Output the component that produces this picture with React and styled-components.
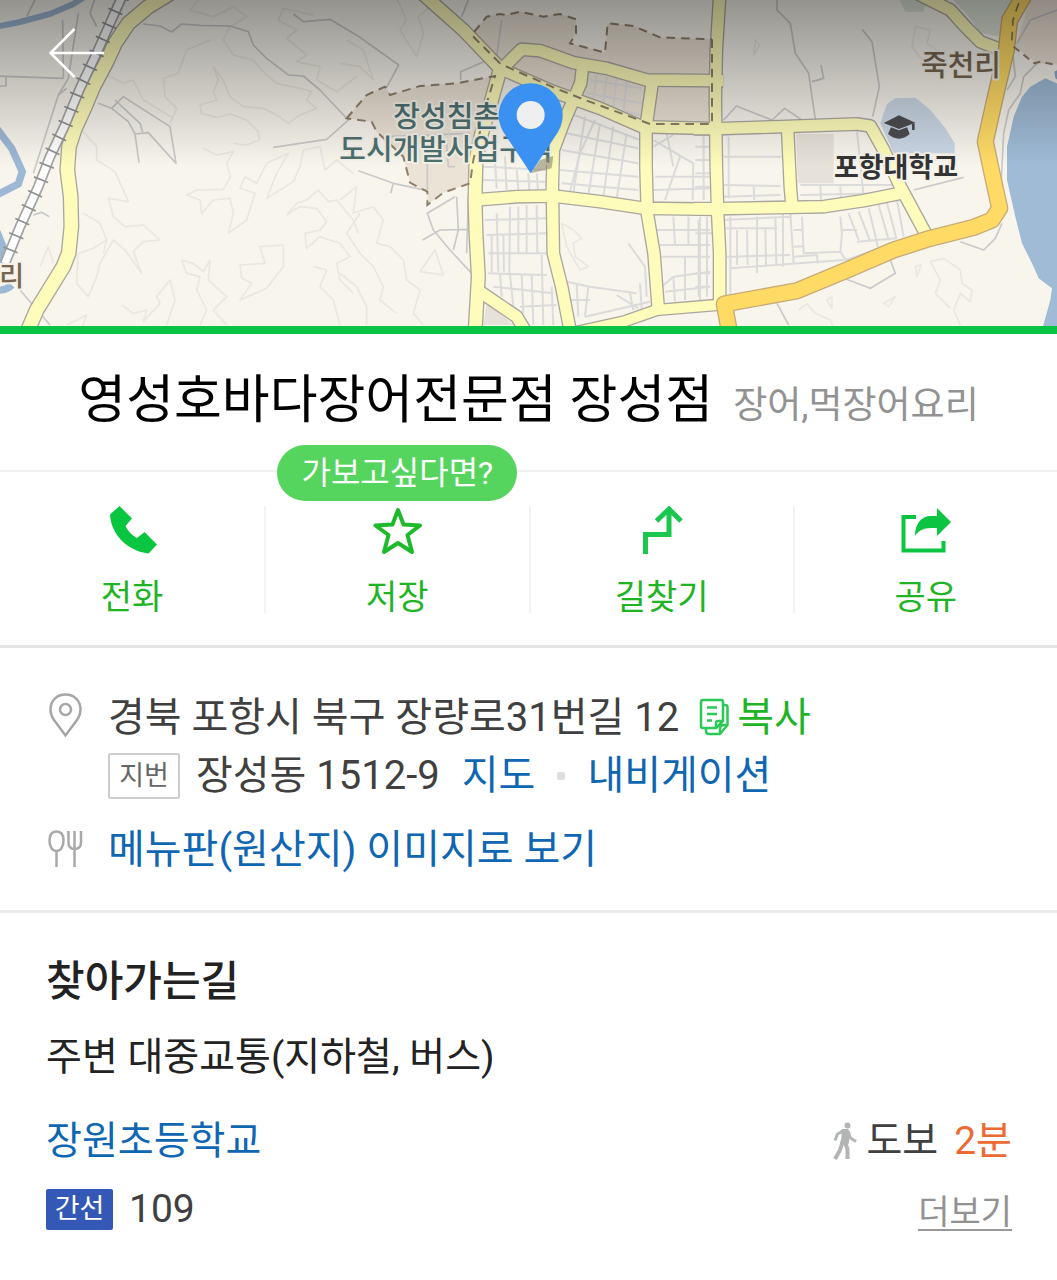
import React from "react";
import styled, { createGlobalStyle } from "styled-components";

const GlobalStyle = createGlobalStyle`
  * { box-sizing: border-box; }
  body {
    margin: 0;
    background: #fff;
    color: #404040;
    font-family: Roboto, "Noto Sans CJK KR", sans-serif;
  }
  h1, h2, p { margin: 0; font-weight: 400; }
  button {
    padding: 0;
    border: 0;
    background: none;
    color: inherit;
    font: inherit;
    cursor: pointer;
  }
  a { color: #0f66b3; text-decoration: none; }
`;

const Page = styled.main`
  width: 100%;
  min-height: 100vh;
  background: #fff;
`;

/* ---------- map ---------- */

const MapFrame = styled.section`
  position: relative;
  border-bottom: 8px solid #0ac444;
`;

const MapSvg = styled.svg`
  display: block;
  width: 100%;
  height: auto;
`;

const BackButton = styled.button`
  position: absolute;
  top: 24px;
  left: 46px;
  display: flex;
`;

const MapLabel = styled.text`
  font-size: ${(p) => p.$size}px;
  font-weight: ${(p) => p.$weight || 500};
  fill: ${(p) => p.$color};
  stroke: #f5f2ea;
  stroke-width: 12px;
  stroke-linejoin: round;
  paint-order: stroke;
  text-anchor: middle;
`;

// The map sheet is split in three tiles; x is the tile's left edge.
const WEST = 0;
const MID = 1020;
const EAST = 2091;

const contours = [
  [WEST, "M640 200 L655 240 L640 275 L650 300 L600 315 L605 340 L650 352 L690 342 L740 360 L775 395 L778 420 L740 435 L700 430"],
  [WEST, "M640 200 L670 240 L690 290 L730 320 L790 325 L830 345 L865 370 L900 345 L950 325 L920 300 L935 275 L900 265 L830 250 L790 215 L760 180 L700 165 L670 120 L690 80"],
  [WEST, "M630 120 L560 150 L535 220 L490 235 L495 290 L530 325 L510 370"],
  [WEST, "M690 80 L740 50 L700 20 L640 50 L570 30 L600 -5"],
  [WEST, "M940 45 L850 25 L835 60 L890 90 L860 115 L920 165 L890 185 L960 200 L950 240 L1010 275 L1070 230"],
  [WEST, "M320 225 L370 250 L400 240 L430 300 L520 355"],
  [WEST, "M245 390 L290 440 L290 480 L345 515 L370 570 L385 605 L325 595 L340 650 L375 680 L430 675 L480 720 L430 725 L400 755 L425 820 L375 750 L340 720 L300 790 L290 830 L265 890 L230 850 L235 760 L280 745 L320 720"],
  [WEST, "M250 640 L300 670 L320 720 L310 760"],
  [WEST, "M610 445 L650 465 L700 455 L680 490 L692 530 L670 568 L590 570 L560 585 L600 600 L605 640 L640 600 L690 595 L700 640 L685 700 L740 660 L765 580 L720 565 L735 530 L770 550 L800 490 L865 460 L830 520 L800 595 L880 545 L900 500 L910 450 L960 440 L975 510 L1010 480 L1060 520"],
  [WEST, "M860 645 L890 610 L920 600 L955 570 L985 605 L1010 600 L1060 660 L1075 700"],
  [WEST, "M860 645 L900 620 L950 625 L980 665 L960 690 L915 700 L920 745 L960 710 L1020 730 L1050 770 L1010 790 L1020 840 L1060 880"],
  [WEST, "M850 735 L780 740 L795 790 L720 795 L725 835 L755 850 L720 900 L800 865 L850 800 Z"],
  [WEST, "M545 780 L560 820 L600 830 L590 870 L620 930 L600 975 M545 780 L580 790 L610 815 L630 780 L625 840 L680 890 L640 930 L680 975"],
  [WEST, "M365 915 L400 940 L440 930 L430 965 L480 910 L470 890 L510 840 L525 900 L500 975"],
  [WEST, "M940 800 L980 810 L960 860 L1000 900 L1020 975 M200 975 L260 945 L240 1000 M120 800 L145 740 L160 790"],
  [MID, "M170 -5 L200 60 L180 90 L230 170 L250 100 L235 50 L270 20 M0 190 L60 200 L100 240 L70 150 L20 120"],
  [MID, "M0 600 L50 560 L40 640 L100 620 L130 660 L110 730 L150 740 L190 780 L200 840 L240 870 L220 940 L250 975"],
  [MID, "M60 640 L20 700 L60 760 L100 800 L130 860 L120 900 L170 940"],
  [MID, "M285 750 L310 825 L240 815 Z M0 820 L50 860 L80 920 L80 975"],
  [MID, "M665 670 L700 690 L725 715 L700 730 L705 770 L745 800 L720 810 L680 740 Z"],
  [EAST, "M655 80 L700 90 L690 130 L735 160 L720 210 L690 200 L645 140 Z M175 120 L188 135 L170 165 Z"],
  [EAST, "M700 785 L740 775 L790 810 L795 850 L825 870 L820 905 L790 880 L770 930 L790 975 M700 785 L730 840 L715 880 L760 925"],
  [EAST, "M305 930 L330 912 L355 940 L400 960 L410 985 M390 900 L405 890 L405 925 Z M560 910 L595 890 L575 920 Z M655 800 L672 795 L660 830 Z"],
];

const lanes = [
  [WEST, "M430 72 L480 78 L515 96 L545 72 L600 76 L690 78 L745 95 L760 135 L800 175 L865 225 L910 228 L960 270 L1045 360 L980 418 L820 442"],
  [WEST, "M880 42 L910 65 L990 58 L1080 112 L1196 195 L1160 262"],
  [WEST, "M-5 228 L190 235 L188 60 M235 40 L205 235 L175 285 L100 520 M-5 258 L18 258 L18 228 M107 -5 L80 50 M285 -5 L270 40 L290 80"],
  [WEST, "M295 310 L335 325 L370 290 L510 380 L528 490 L445 398 L405 402 L385 365 L335 325 M345 300 L420 370 L428 396 M405 402 L417 488"],
  [WEST, "M100 645 L125 637 L148 650 M60 870 L150 975 M175 285 L200 265"],
  [MID, "M455 175 L362 215 L362 240 M385 0 L365 50 M485 60 L470 170 M55 512 L160 550 L262 572 M160 550 L152 580"],
  [MID, "M345 590 L262 640 L280 690 L330 750 L395 820 M248 720 L300 690 L380 688 M350 590 L355 690 L340 750 M385 590 L380 760"],
  [MID, "M135 410 L390 400 M262 490 L262 570 M320 430 L325 500 L345 500"],
  [EAST, "M240 -5 L240 30 L280 70 L295 160 L335 220 L345 290 L355 358 M345 245 L380 235 L372 195 M495 88 L525 125 L547 260 L527 350"],
  [EAST, "M80 360 L118 318 L225 360 L263 325 L315 360 M650 570 L800 532"],
  [EAST, "M945 140 L955 230 L930 270 M1080 30 L1000 60 L960 130 M1020 190 L980 230 L970 280 L935 330 L920 400 L912 560"],
  [EAST, "M790 725 L860 750 L895 715 L915 670 M440 835 L520 865 L595 820 L580 780 M240 910 L275 975"],
];

const blocks = [
  [MID, "M430 500 L620 510 M425 540 L620 545 M465 480 L470 565 M495 470 L500 570 M530 510 L535 570 M565 520 L568 570 M590 520 L594 570"],
  [MID, "M690 340 L900 420 M680 400 L895 445 M665 450 L895 490 M660 510 L895 530 M665 550 L895 570 M735 350 L700 580 M780 370 L745 585 M820 380 L790 590 M860 400 L830 595 M765 360 L720 460 L690 575"],
  [MID, "M750 240 L905 265 M740 280 L905 310 M770 225 L760 300 M800 230 L790 310 M830 235 L820 325 M860 245 L850 335 M745 310 L900 345"],
  [MID, "M940 420 L1060 490 M945 530 L1110 530 M940 570 L1110 565 M1020 470 L975 600 M1060 490 L1058 600 M1000 405 L940 440 M980 400 L1000 500"],
  [MID, "M435 660 L620 655 M440 705 L620 700 M445 760 L620 760 M445 820 L620 825 M470 640 L475 815 M510 620 L508 820 M535 620 L535 760 M560 615 L560 760 M590 615 L592 760 M455 705 L455 815 M490 705 L492 815"],
  [MID, "M460 860 L640 880 M540 920 L650 915 M480 820 L485 890 M510 825 L520 920 M545 825 L550 940 M575 825 L580 975 M605 765 L610 975 M635 860 L640 975"],
  [MID, "M680 845 L750 860 L890 880 M865 730 L915 800 L920 890 M690 900 L750 900 M710 855 L715 950 M745 860 L735 950 M735 950 L930 905 M870 880 L880 930 M900 850 L905 925 M830 885 L895 925"],
  [MID, "M950 690 L1110 690 M960 735 L1110 735 M965 770 L1110 770 M1000 650 L1005 735 M1045 650 L1045 735 M1080 650 L1080 900 M1000 830 L965 860 M1000 830 L1110 815 M1000 830 L1005 905 M1035 770 L1035 900 M975 875 L1110 860"],
  [EAST, "M80 470 L255 470 M95 410 L95 595 M80 555 L250 558 M80 590 L250 585 M170 558 L172 600 M310 555 L590 555 M310 585 L580 580 M370 555 L372 600 M480 395 L500 590 M430 560 L432 600"],
  [EAST, "M-5 440 L40 440 M-5 480 L40 480 M-5 520 L40 520 M-5 560 L40 560 M20 400 L20 600"],
  [EAST, "M100 650 L100 890 M80 660 L280 650 M85 685 L240 685 M120 690 L120 795 M150 690 L152 795 M180 650 L180 820 M205 685 L207 795 M235 650 L238 795 M90 770 L280 765 M100 805 L440 780 M258 640 L258 800 M280 640 L290 790"],
  [EAST, "M290 690 L315 690 M290 740 L320 738 M315 650 L320 760 L430 755 M290 770 L360 765 L362 790 M430 650 L435 700 L430 755 L445 780 L670 705 M430 690 L480 690 M455 640 L485 720 M485 635 L520 725 M515 625 L545 750 M545 615 L575 720 M570 608 L598 715 M600 600 L620 710 M480 725 L600 715"],
  [EAST, "M5 660 L5 890 M-5 700 L45 700 M-5 820 L40 820 M30 650 L30 890 M-5 860 L40 860"],
];

const yellowRoads = [
  [WEST, 42, "M510 -20 L445 20 L385 70 L345 130 L320 185 L280 260 L255 320 L225 385 L207 440 L202 510 L212 590 L214 680 L206 760 L190 800 L150 865 L110 930 L80 1000"],
  [MID, 38, "M235 -30 L370 90 L480 205"],
  [MID, 36, "M480 212 L545 148 L600 152 L700 188 L800 205 L920 240 L1150 242"],
  [MID, 36, "M480 205 L640 275 L780 325 L905 380 L1130 386"],
  [MID, 36, "M728 198 L722 250 L700 300 L670 370 L640 450 L637 560 L640 760 L665 860 L692 1000"],
  [MID, 40, "M480 210 L455 300 L425 400 L408 480 L405 600 L408 700 L415 830 L405 1000"],
  [MID, 36, "M938 240 L918 380 L918 500 L922 640 L942 760 L955 930"],
  [MID, 36, "M405 600 L530 590 L640 588 L780 605 L915 625 L1131 628"],
  [MID, 36, "M415 872 L530 950 L560 1000"],
  [MID, 32, "M690 1000 L850 965 L950 930 L1140 914"],
  [EAST, 36, "M-10 386 L60 386 L250 380 L480 372 L520 378 L560 450 L610 560 L692 712"],
  [EAST, 36, "M68 -10 L58 150 L55 300 L58 500 L62 640 L68 760 L68 905"],
  [EAST, 36, "M-10 626 L60 626 L280 622 L380 620 L500 602 L620 578"],
  [EAST, 36, "M272 390 L280 560 L285 620"],
  [EAST, 36, "M660 -20 L760 30 L810 85 L850 125 L920 152"],
];

const orangeRoad = "M985 -20 L938 60 L928 150 L895 290 L865 425 L885 520 L908 625 L885 660 L830 682 L700 715 L590 750 L450 810 L300 872 L82 912 L98 1000";
const railway = "M366 -10 L330 70 L290 160 L240 265 L195 375 L150 470 L115 560 L60 680 L15 790";
const zoneWest = "M20 355 L80 285 L135 260 L150 285 L240 258 L350 250 L465 228 L440 310 L400 480 L390 550 L310 578 L262 615 L262 575 L210 548 L190 470 L110 395 L95 365 Z";
const zoneNorthEdge = "M480 190 L395 105 L440 50 L480 42 L500 45 L540 35 L610 50 L660 42 L708 58 L708 100 L690 130 L795 158 L803 70 L880 78 L960 112 L1116 118";
const zoneSouthEdge = "M1116 118 L1116 372 L930 372 L730 298 L640 262 L500 200 L480 190";

function Strokes({ items, color, width }) {
  return (
    <g fill="none" stroke={color} strokeWidth={width} strokeLinejoin="round">
      {items.map(([x, d], i) => (
        <path key={i} d={d} transform={`translate(${x})`} />
      ))}
    </g>
  );
}

function Roads({ color, grow }) {
  return (
    <g fill="none" stroke={color} strokeLinejoin="round">
      {yellowRoads.map(([x, w, d], i) => (
        <path key={i} d={d} strokeWidth={w + grow} transform={`translate(${x})`} />
      ))}
    </g>
  );
}

function AreaMap() {
  return (
    <MapSvg viewBox="0 0 3171 978" role="img" aria-label="지도">
      <defs>
        <linearGradient id="shade" x1="0" y1="0" x2="0" y2="1">
          <stop offset="0" stopColor="#000" stopOpacity=".4" />
          <stop offset="1" stopColor="#000" stopOpacity="0" />
        </linearGradient>
      </defs>
      <rect width="3171" height="978" fill="#f8f5ed" />

      <g transform={`translate(${EAST})`}>
        <path d="M765 -5 L950 -5 L905 110 L850 98 L815 50 Z" fill="#dbe2d6" />
        <path d="M605 -5 H690 L680 35 H625 Z" fill="#dbe2d6" />
        <path d="M1000 -5 H1090 V195 L1020 190 L955 140 Z" fill="#efe5d8" />
        <path d="M560 340 L570 312 L595 295 L655 293 L700 330 L745 385 L773 430 L773 460 H590 L550 370 Z" fill="#cbd7e6" />
        <path d="M297 402 H410 V550 H302 Z" fill="#e6e2d9" />
        <path d="M1045 235 L1000 260 L975 290 L950 350 L930 440 L930 540 L955 650 L975 730 L1010 800 L1025 835 L1065 865 L1060 900 L1035 990 H1090 V255 Z" fill="#9fbbd6" />
        <path d="M1072 215 L1090 205 V245 L1075 235 Z" fill="#8ea9cb" />
      </g>
      <g transform={`translate(${MID})`} fill="#ebe3d5">
        <path d={zoneWest} />
        <path d={`${zoneNorthEdge} V372 H930 L730 298 L640 262 L500 200 Z`} />
        <path d="M440 905 L520 975 H430 Z" fill="#e6e2d9" />
      </g>

      <Strokes items={contours} color="#ebe7df" width={5} />

      <g fill="none" stroke="#9db8d4">
        <path d="M-10 80 L60 66 L150 42 L220 12 L270 -20" strokeWidth="18" />
        <path d="M-10 385 L35 445 L67 515 L55 552 L-10 585" strokeWidth="22" />
        <path d="M-8 695 L10 740 L8 790" strokeWidth="20" />
        <path d="M-8 870 Q20 872 35 855" strokeWidth="22" />
      </g>

      <Strokes items={blocks} color="#dcdbdc" width={6} />
      <Strokes items={lanes} color="#cac9ca" width={5} />

      <Roads color="#aaa79f" grow={6} />
      <Roads color="#fefcba" grow={-2} />

      <g fill="none" transform={`translate(${EAST})`} strokeLinejoin="round">
        <path d={orangeRoad} stroke="#c8ab78" strokeWidth="52" />
        <path d={orangeRoad} stroke="#ffdb66" strokeWidth="44" />
        <path d="M965 10 L948 60 L944 130" stroke="#8a7a50" strokeWidth="5" strokeDasharray="26 18" />
        <path d="M950 140 L1012 190 L1030 185 L1090 198" stroke="#8f8069" strokeWidth="6" strokeDasharray="22 16" />
      </g>

      <g fill="none">
        <path d={railway} stroke="#a3a3a3" strokeWidth="32" />
        <path d={railway} stroke="#fff" strokeWidth="22" />
        <path d={railway} stroke="#8f8f8f" strokeWidth="46" strokeDasharray="5 41" />
      </g>

      <g transform={`translate(${MID})`} fill="none" stroke="#8f8069" strokeWidth="6" strokeDasharray="26 18">
        <path d={zoneWest} />
        <path d={zoneNorthEdge} />
        <path d={zoneSouthEdge} />
      </g>

      <MapLabel $size={87} $color="#4d706f">
        <tspan x="1340" y="382">장성침촌</tspan>
        <tspan x="1338" y="480">도시개발사업구역</tspan>
      </MapLabel>
      <MapLabel x="2883" y="228" $size={87} $color="#77664f">죽천리</MapLabel>
      <MapLabel x="2688" y="532" $size={81} $weight={700} $color="#333">포항대학교</MapLabel>
      <MapLabel x="35" y="858" $size={81} $color="#77664f">리</MapLabel>

      <g transform={`translate(${EAST})`} fill="#4d4d50">
        <path d="M560 369 L606 346 L655 368 L606 387 Z" />
        <path d="M582 382 L606 391 L630 382 L638 402 Q606 430 573 402 Z" />
        <path d="M645 370 H653 V390 H645 Z" />
      </g>

      <rect width="3171" height="500" fill="url(#shade)" />

      <g transform={`translate(${MID})`}>
        <path d="M572 520 L600 480 L640 468 L635 505 Z" fill="#8d8a6d" opacity=".6" />
        <path d="M572 520 L490 396 A96 96 0 1 1 654 396 Z" fill="#3a91f1" />
        <circle cx="572" cy="345" r="42" fill="#efefef" />
      </g>
    </MapSvg>
  );
}

/* ---------- title ---------- */

const TitleBar = styled.header`
  display: flex;
  flex-wrap: wrap;
  align-items: baseline;
  justify-content: center;
  gap: 0 20px;
  padding: 29px 24px 31px;
  border-bottom: 2px solid #f0f0f0;
`;

const Name = styled.h1`
  color: #000;
  font-size: 52px;
  line-height: 76px;
`;

const Category = styled.span`
  color: #929292;
  font-size: 37px;
  line-height: 56px;
`;

/* ---------- actions ---------- */

const Actions = styled.nav`
  display: grid;
  grid-template-columns: repeat(4, 1fr);
  padding: 34px 0 32px;
  border-bottom: 3px solid #e3e5e7;
`;

const ActionCell = styled.div`
  position: relative;
  display: flex;
  justify-content: center;

  & + & { border-left: 2px solid #f3f3f3; }
`;

const ActionButton = styled.button`
  display: flex;
  flex-direction: column;
  align-items: center;
  gap: 25px;
  color: #1fb425;
  font-size: 34px;
  line-height: 32px;
`;

const Hint = styled.span`
  position: absolute;
  bottom: 112px;
  left: 50%;
  transform: translateX(-50%);
  width: 240px;
  border-radius: 28px;
  background: rgba(67, 207, 76, 0.9);
  color: #fff;
  font-size: 32px;
  line-height: 56px;
  text-align: center;
  white-space: nowrap;
`;

/* ---------- info ---------- */

const Info = styled.section`
  display: grid;
  gap: 16px;
  padding: 41px 46px 31px;
  border-bottom: 3px solid #eaebed;
  font-size: 40px;
  line-height: 58px;
`;

const InfoRow = styled.div`
  display: grid;
  grid-template-columns: 40px 1fr;
  column-gap: 22px;
`;

const IconSlot = styled.span`
  display: flex;
  align-items: center;
  height: 55px;
`;

const Line = styled.div`
  display: flex;
  flex-wrap: wrap;
  align-items: center;
`;

const LotLine = styled(Line)`
  gap: 0 22px;
`;

const Lot = styled.span`
  display: flex;
  align-items: center;
  gap: 16px;
`;

const LotBadge = styled.span`
  width: 72px;
  border: 2px solid #cdcdcd;
  border-radius: 2px;
  color: #666;
  font-size: 27px;
  line-height: 42px;
  text-align: center;
`;

const CopyButton = styled.button`
  display: flex;
  align-items: center;
  gap: 6px;
  margin-left: 20px;
  color: #1fb425;
`;

const Dot = styled.i`
  width: 8px;
  height: 8px;
  border-radius: 2px;
  background: #dedede;
`;

/* ---------- directions ---------- */

const Directions = styled.section`
  padding: 40px 45px 41px 46px;
  font-size: 39px;
  line-height: 58px;
`;

const Heading = styled.h2`
  margin-bottom: 17px;
  color: #222;
  font-size: 42px;
  font-weight: 500;
`;

const Nearby = styled.p`
  margin-bottom: 26px;
  color: #222;
`;

const StopRow = styled.div`
  display: flex;
  align-items: center;
  justify-content: space-between;

  & + & { margin-top: 10px; }
`;

const Walk = styled.span`
  display: flex;
  align-items: center;
  gap: 8px;
`;

const Minutes = styled.strong`
  margin-left: 8px;
  color: #ee6a33;
  font-weight: 400;
`;

const Bus = styled.span`
  display: flex;
  align-items: center;
  gap: 16px;
`;

const BusBadge = styled.span`
  width: 67px;
  border-radius: 2px;
  background: #3458b5;
  color: #fff;
  font-size: 27px;
  line-height: 41px;
  text-align: center;
`;

const MoreLink = styled.a`
  padding-top: 8px;
  border-bottom: 2px solid #999;
  color: #929292;
  font-size: 34px;
  line-height: 34px;
`;

/* ---------- icons ---------- */

const PhoneIcon = () => (
  <svg width="50" height="50" viewBox="0 0 50 50" fill="#08c63f" aria-hidden="true">
    <path d="M12.500 0 L25 12.500 L18.500 20 C21 25 25 29.500 30 32 L37.500 26 L50 38.500 L41.500 47.500 C20 45 4 28 3 8.500 Z" />
  </svg>
);

const StarIcon = () => (
  <svg width="50" height="50" viewBox="0 0 50 50" fill="none" stroke="#1fb92c" strokeWidth="4" strokeLinejoin="round" aria-hidden="true">
    <path d="M26 4 L31.500 18.500 L48 19.500 L35.500 29 L40 46 L26 37 L12 46 L16.500 29 L3.500 19.500 L20.500 18.500 Z" />
  </svg>
);

const RouteIcon = () => (
  <svg width="50" height="50" viewBox="0 0 50 50" fill="none" stroke="#1bc74e" strokeWidth="5" aria-hidden="true">
    <path d="M8.500 48 V28.500 H32 V4 M19.500 15 L32 3 L44 15" />
  </svg>
);

const ShareIcon = () => (
  <svg width="50" height="50" viewBox="0 0 50 50" aria-hidden="true">
    <path d="M15 11 H2.500 V44.500 H42.500 V35" fill="none" stroke="#0bc542" strokeWidth="4" />
    <path d="M36 2 L50 16 L36 30 V22 H30 C22 22 17 25 14 30 C14 18 20 10 30 10 H36 Z" fill="#0bc542" />
  </svg>
);

const PinIcon = () => (
  <svg width="40" height="50" viewBox="0 0 40 50" fill="none" stroke="#a6a6a6" strokeWidth="2.500" aria-hidden="true">
    <path d="M19.500 43.500 L8 28 C5.500 24.500 4.500 21 4.500 17.500 C4.500 8.500 11 2.500 19.500 2.500 C28 2.500 34.500 8.500 34.500 17.500 C34.500 21 33.500 24.500 31 28 Z" />
    <circle cx="19.500" cy="17.500" r="5.500" />
  </svg>
);

const CutleryIcon = () => (
  <svg width="40" height="40" viewBox="0 0 40 40" fill="none" stroke="#a9a9a9" strokeWidth="2.500" aria-hidden="true">
    <path d="M10.500 22 V38 M10.500 22 C6 22 3.500 17 3.500 11.500 C3.500 6 6 2.500 10.500 2.500 C15 2.500 17.500 6 17.500 11.500 C17.500 17 15 22 10.500 22 Z" />
    <path d="M22.500 2 V13 C22.500 18 25 20 28.500 20 C32.500 20 35 18 35 13 V2 M28.500 2 V38" />
  </svg>
);

const CopyIcon = () => (
  <svg width="32" height="40" viewBox="0 0 32 40" fill="none" stroke="#2bc955" strokeWidth="2.500" strokeLinejoin="round" aria-hidden="true">
    <path d="M4 2 H22 Q24 2 24 4 V23 L17 30 H4 Q2 30 2 28 V4 Q2 2 4 2 Z" />
    <path d="M24 23 H19 Q17 23 17 25 V30" />
    <path d="M24 7 H26 Q28.500 7 28.500 9 V27 L21 36 H10 Q7 36 7 33 V31 M28.500 27 H25 Q21 27 21 31 V36" />
    <path d="M8 9.500 H18 M8 16 H18 M8 22.500 H13" />
  </svg>
);

const WalkerIcon = () => (
  <svg width="26" height="38" viewBox="0 0 26 38" fill="none" stroke="#b3b5b4" aria-hidden="true">
    <circle cx="15.500" cy="3.500" r="3" fill="#b3b5b4" stroke="none" />
    <path d="M10 7.500 H16 L18 11 L16 22 H8.500 L10 15 Z" fill="#b3b5b4" stroke="#b3b5b4" strokeWidth="1" strokeLinejoin="round" />
    <path d="M11 9 L5.500 12 L3 18.500 M16 10 L18.500 16 L24 19.500" strokeWidth="3" />
    <path d="M10.500 20 L8 28 L3 37 M13 20 L15.500 27 V37" strokeWidth="4" />
  </svg>
);

const actions = [
  { label: "전화", Icon: PhoneIcon },
  { label: "저장", Icon: StarIcon, hint: "가보고싶다면?" },
  { label: "길찾기", Icon: RouteIcon },
  { label: "공유", Icon: ShareIcon },
];

export default function App() {
  return (
    <Page>
      <GlobalStyle />
      <MapFrame>
        <AreaMap />
        <BackButton type="button" aria-label="뒤로">
          <svg width="60" height="58" viewBox="0 0 60 58" fill="none" stroke="#fff" strokeWidth="2.500" aria-hidden="true">
            <path d="M58 29 H4.500 M28.500 5 L4.500 29 L28.500 53" />
          </svg>
        </BackButton>
      </MapFrame>

      <TitleBar>
        <Name>영성호바다장어전문점 장성점</Name>
        <Category>장어,먹장어요리</Category>
      </TitleBar>

      <Actions>
        {actions.map(({ label, Icon, hint }) => (
          <ActionCell key={label}>
            {hint && <Hint>{hint}</Hint>}
            <ActionButton type="button">
              <Icon />
              {label}
            </ActionButton>
          </ActionCell>
        ))}
      </Actions>

      <Info>
        <InfoRow>
          <IconSlot><PinIcon /></IconSlot>
          <div>
            <Line>
              경북 포항시 북구 장량로31번길 12
              <CopyButton type="button"><CopyIcon />복사</CopyButton>
            </Line>
            <LotLine>
              <Lot><LotBadge>지번</LotBadge>장성동 1512-9</Lot>
              <a href="#map">지도</a>
              <Dot />
              <a href="#navigation">내비게이션</a>
            </LotLine>
          </div>
        </InfoRow>
        <InfoRow>
          <IconSlot><CutleryIcon /></IconSlot>
          <a href="#menu">메뉴판(원산지) 이미지로 보기</a>
        </InfoRow>
      </Info>

      <Directions>
        <Heading>찾아가는길</Heading>
        <Nearby>주변 대중교통(지하철, 버스)</Nearby>
        <StopRow>
          <a href="#stop">장원초등학교</a>
          <Walk><WalkerIcon />도보<Minutes>2분</Minutes></Walk>
        </StopRow>
        <StopRow>
          <Bus><BusBadge>간선</BusBadge>109</Bus>
          <MoreLink href="#more">더보기</MoreLink>
        </StopRow>
      </Directions>
    </Page>
  );
}
